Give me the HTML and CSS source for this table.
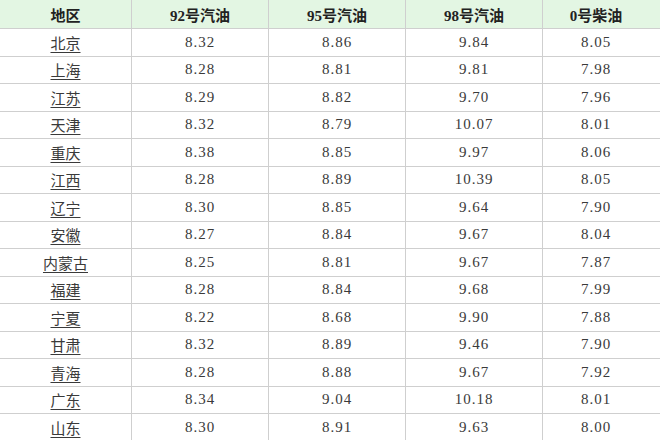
FILE: index.html
```html
<!DOCTYPE html>
<html lang="zh">
<head>
<meta charset="utf-8">
<link rel="stylesheet" href="styles.css">
</head>
<body>
<table class="price-table">
  <colgroup>
    <col class="c-region"><col class="c-fuel"><col class="c-fuel"><col class="c-fuel"><col class="c-last">
  </colgroup>
  <thead>
    <tr><th>地区</th><th>92号汽油</th><th>95号汽油</th><th>98号汽油</th><th class="last">0号柴油</th></tr>
  </thead>
  <tbody>
    <tr><td><a href="#">北京</a></td><td>8.32</td><td>8.86</td><td>9.84</td><td class="last">8.05</td></tr>
    <tr><td><a href="#">上海</a></td><td>8.28</td><td>8.81</td><td>9.81</td><td class="last">7.98</td></tr>
    <tr><td><a href="#">江苏</a></td><td>8.29</td><td>8.82</td><td>9.70</td><td class="last">7.96</td></tr>
    <tr><td><a href="#">天津</a></td><td>8.32</td><td>8.79</td><td>10.07</td><td class="last">8.01</td></tr>
    <tr><td><a href="#">重庆</a></td><td>8.38</td><td>8.85</td><td>9.97</td><td class="last">8.06</td></tr>
    <tr><td><a href="#">江西</a></td><td>8.28</td><td>8.89</td><td>10.39</td><td class="last">8.05</td></tr>
    <tr><td><a href="#">辽宁</a></td><td>8.30</td><td>8.85</td><td>9.64</td><td class="last">7.90</td></tr>
    <tr><td><a href="#">安徽</a></td><td>8.27</td><td>8.84</td><td>9.67</td><td class="last">8.04</td></tr>
    <tr><td><a href="#">内蒙古</a></td><td>8.25</td><td>8.81</td><td>9.67</td><td class="last">7.87</td></tr>
    <tr><td><a href="#">福建</a></td><td>8.28</td><td>8.84</td><td>9.68</td><td class="last">7.99</td></tr>
    <tr><td><a href="#">宁夏</a></td><td>8.22</td><td>8.68</td><td>9.90</td><td class="last">7.88</td></tr>
    <tr><td><a href="#">甘肃</a></td><td>8.32</td><td>8.89</td><td>9.46</td><td class="last">7.90</td></tr>
    <tr><td><a href="#">青海</a></td><td>8.28</td><td>8.88</td><td>9.67</td><td class="last">7.92</td></tr>
    <tr><td><a href="#">广东</a></td><td>8.34</td><td>9.04</td><td>10.18</td><td class="last">8.01</td></tr>
    <tr><td><a href="#">山东</a></td><td>8.30</td><td>8.91</td><td>9.63</td><td class="last">8.00</td></tr>
  </tbody>
</table>
</body>
</html>
```

FILE: styles.css
```css
html, body {
  margin: 0;
  padding: 0;
  background: #ffffff;
  overflow: hidden;
}

.price-table {
  border-collapse: collapse;
  table-layout: fixed;
  width: 662px;
  margin-left: -1px;
  margin-top: -1px;
  font-family: "Liberation Serif", "Noto Sans CJK SC", serif;
  font-size: 15px;
  color: #3a3a3a;
}

.c-region { width: 132px; }
.c-fuel { width: 137px; }
.c-last { width: 119px; }

.price-table th,
.price-table td {
  border: 1px solid #cfcfcf;
  text-align: center;
  padding: 0;
  white-space: nowrap;
}

.price-table th.last,
.price-table td.last {
  padding-right: 12px;
}

.price-table th {
  height: 28px;
  background: #e3f6e3;
  font-weight: bold;
  color: #222222;
}

.price-table td {
  height: 26.5px;
  letter-spacing: 1px;
}

.price-table a {
  color: #3a3a3a;
  letter-spacing: 0;
  text-decoration: underline;
  text-underline-offset: 3px;
}
```
